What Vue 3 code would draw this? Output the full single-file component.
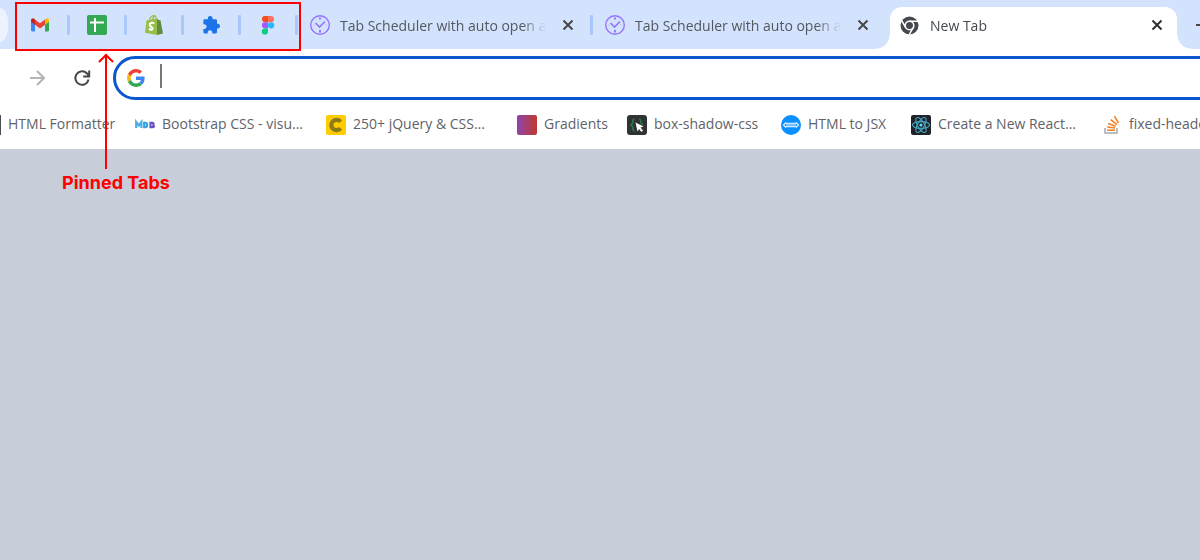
<script setup>
import { ref } from 'vue'

const pinned = ['Gmail', 'Sheets', 'Shopify', 'Extensions', 'Figma']
const tabs = ['Tab Scheduler with auto open and close', 'Tab Scheduler with auto open and close']
const bookmarks = [
  { icon: 'doc', label: 'HTML Formatter' },
  { icon: 'mdb', label: 'Bootstrap CSS - visu...' },
  { icon: 'jquery', label: '250+ jQuery & CSS...' },
  { icon: 'gradient', label: 'Gradients' },
  { icon: 'shadow', label: 'box-shadow-css' },
  { icon: 'jsx', label: 'HTML to JSX' },
  { icon: 'react', label: 'Create a New React...' },
  { icon: 'stack', label: 'fixed-header-table' },
]
const query = ref('')
</script>

<template>
  <div class="browser">
    <header class="strip">
      <div class="stub"></div>
      <button v-for="name in pinned" :key="name" class="pin" type="button" :aria-label="name">
        <svg v-if="name === 'Gmail'" width="20" height="20" viewBox="0 0 20 20">
          <path d="M1 6v9.300c0 .7.500 1.200 1.200 1.200H5V8.800z" fill="#4285f4" />
          <path d="M19 6v9.300c0 .7-.5 1.200-1.200 1.200H15V8.800z" fill="#34a853" />
          <path d="M15 4.500v5.300l4-3V5.300c0-2-2-2.500-3.300-1.500z" fill="#fbbc04" />
          <path d="M5 4.500v5.300l-4-3V5.300c0-2 2-2.500 3.300-1.500z" fill="#c5221f" />
          <path d="M5 4.500l5 3.800 5-3.800v5.300l-5 3.800-5-3.800z" fill="#ea4335" />
        </svg>
        <svg v-else-if="name === 'Sheets'" width="20" height="20" viewBox="0 0 20 20">
          <rect width="20" height="20" rx="2" fill="#34a853" />
          <path d="M3 7.500h14M8 3v14" stroke="#fff" stroke-width="2" />
        </svg>
        <svg v-else-if="name === 'Shopify'" width="20" height="20" viewBox="0 0 20 20">
          <path d="M2.500 5.500 13 3.500V20L1 17.700z" fill="#95bf47" />
          <path d="M13 3.500l1.500 1.500 2 .3L19 18.600 13 20z" fill="#5e8e3e" />
          <path d="M5.500 6C6 2.500 8.200.6 10 .6c1.700 0 2.300 2 2.300 4M8.500 5c.3-2 1.200-3.600 2.400-4" fill="none" stroke="#95bf47" stroke-width="1.200" />
          <path d="M10.300 8.300C8 7.200 5.600 8 5.700 9.900c.1 2 3 2 2.900 3.800-.1 1.500-2 1.500-3.800.2" fill="none" stroke="#fff" stroke-width="2" />
        </svg>
        <svg v-else-if="name === 'Extensions'" width="20" height="20" viewBox="0 0 20 20">
          <path d="M3.800 4.200H7C6.300 2.300 7.600 1 9.200 1s2.900 1.300 2.200 3.200h3.200c.8 0 1.400.6 1.400 1.400v3.200c1.800-.4 3 .8 3 2.300s-1.200 2.700-3 2.300v3.700c0 .8-.6 1.400-1.400 1.400h-3.300c.3-2-.8-3.200-2.300-3.200s-2.600 1.200-2.300 3.200H3.800c-.8 0-1.400-.6-1.400-1.400v-3.200c2 .3 3.200-.8 3.200-2.400S4.400 8.900 2.400 9.200V5.600c0-.8.6-1.400 1.400-1.400z" fill="#1a73e8" />
        </svg>
        <svg v-else width="20" height="20" viewBox="0 0 20 20">
          <path d="M10 1H7a3.100 3.100 0 0 0 0 6.200h3z" fill="#f24e1e" />
          <path d="M10 1h3a3.100 3.100 0 0 1 0 6.200h-3z" fill="#ff7262" />
          <path d="M10 7.200H7a3.100 3.100 0 0 0 0 6.200h3z" fill="#a259ff" />
          <circle cx="13.100" cy="10.300" r="3.100" fill="#1abcfe" />
          <path d="M10 13.400H7a3.100 3.100 0 1 0 3 3.100z" fill="#0acf83" />
        </svg>
      </button>
      <div v-for="(title, i) in tabs" :key="i" class="tab" :class="{ divided: i === 0 }">
        <svg width="20" height="20" viewBox="0 0 20 20" fill="none" stroke="#9775fa">
          <circle cx="10" cy="10" r="9.300" stroke-width="1.400" />
          <path d="M5.500 8l4 4L15 6.500" stroke-width="1.700" />
          <path d="M10 2.500v2M10 15v2.500" stroke-width="2" />
          <path d="M3.500 10h1M15.500 10h1" stroke-width="1" opacity=".5" />
        </svg>
        <span class="title">{{ title }}</span>
        <button class="close" type="button" aria-label="Close tab">
          <svg width="12" height="12" viewBox="0 0 12 12"><path d="M1.500 1.500l9 9m0-9l-9 9" stroke="#474747" stroke-width="2" /></svg>
        </button>
      </div>
      <div class="tab active">
        <svg width="20" height="20" viewBox="0 0 20 20">
          <circle cx="9.500" cy="9.500" r="9" fill="#45494d" />
          <circle cx="9.500" cy="9.500" r="4.300" fill="#45494d" stroke="#fff" stroke-width="1.600" />
          <path d="M9.500 5.200h8.500M5.800 11.700 1.600 4.500M13.200 11.700 9 19" stroke="#fff" stroke-width="1.500" />
        </svg>
        <span class="title">New Tab</span>
        <button class="close" type="button" aria-label="Close tab">
          <svg width="12" height="12" viewBox="0 0 12 12"><path d="M1.500 1.500l9 9m0-9l-9 9" stroke="#303030" stroke-width="2" /></svg>
        </button>
      </div>
      <button class="add" type="button" aria-label="New tab">
        <svg width="14" height="14" viewBox="0 0 14 14"><path d="M0 7h14M7 0v14" stroke="#474747" stroke-width="2" /></svg>
      </button>
    </header>

    <div class="toolbar">
      <button class="nav" type="button" aria-label="Back">
        <svg width="18" height="18" viewBox="0 0 18 18" fill="none" stroke="#b4b4b4" stroke-width="2"><path d="M17 9H2M9 2L2 9l7 7" /></svg>
      </button>
      <button class="nav" type="button" aria-label="Forward">
        <svg width="18" height="18" viewBox="0 0 18 18" fill="none" stroke="#b4b4b4" stroke-width="2"><path d="M2 9h14M9 2l7 7-7 7" /></svg>
      </button>
      <button class="nav" type="button" aria-label="Reload">
        <svg width="18" height="18" viewBox="0 0 18 18" fill="none" stroke="#474747" stroke-width="2"><path d="M15.600 10.500A6.700 6.700 0 1 1 14 4.500l2 2.500M16.200 1.500v6h-6" /></svg>
      </button>
      <label class="omnibox">
        <svg width="18" height="18" viewBox="0 0 48 48">
          <path fill="#ea4335" d="M24 9.500c3.540 0 6.710 1.220 9.210 3.600l6.850-6.850C35.900 2.380 30.470 0 24 0 14.620 0 6.510 5.380 2.560 13.220l7.980 6.190C12.430 13.720 17.740 9.500 24 9.500z" />
          <path fill="#4285f4" d="M46.980 24.550c0-1.570-.15-3.090-.38-4.550H24v9.020h12.940c-.58 2.960-2.260 5.480-4.780 7.180l7.730 6c4.510-4.180 7.090-10.360 7.090-17.650z" />
          <path fill="#fbbc05" d="M10.530 28.590c-.48-1.450-.76-2.990-.76-4.590s.27-3.140.76-4.590l-7.980-6.190C.92 16.460 0 20.120 0 24s.92 7.540 2.560 10.780z" />
          <path fill="#34a853" d="M24 48c6.480 0 11.930-2.130 15.890-5.810l-7.730-6c-2.150 1.450-4.920 2.300-8.160 2.300-6.260 0-11.570-4.220-13.470-9.910l-7.980 6.190C6.510 42.620 14.620 48 24 48z" />
        </svg>
        <span class="caret"></span>
        <input v-model="query" type="text" aria-label="Search Google or type a URL" />
      </label>
    </div>

    <nav class="bookmarks">
      <a v-for="b in bookmarks" :key="b.label" href="#">
        <svg v-if="b.icon === 'doc'" width="20" height="20" viewBox="0 0 20 20"><rect width="20" height="20" fill="#4b4f55" /></svg>
        <svg v-else-if="b.icon === 'mdb'" width="20" height="20" viewBox="0 0 20 20" fill="none" stroke-width="2.200">
          <path d="M1.200 13V7l2.600 3.500L6.400 7v6" stroke="#4aaeea" />
          <path d="M9.200 7.800h1c2.600 0 2.600 4.400 0 4.400h-1z" stroke="#3ba4dc" />
          <path d="M15.500 7.800h1.800c1.700 0 1.700 2.100 0 2.200 2.200 0 2.200 2.200 0 2.200h-1.800z" stroke="#6951c5" />
        </svg>
        <svg v-else-if="b.icon === 'jquery'" width="20" height="20" viewBox="0 0 20 20">
          <rect width="20" height="20" rx="2" fill="#fc0" /><path d="M14.600 6.800A5.200 5.200 0 1 0 14.600 13.200" fill="none" stroke="#8c7a14" stroke-width="4.200" />
        </svg>
        <span v-else-if="b.icon === 'gradient'" class="swatch"></span>
        <svg v-else-if="b.icon === 'shadow'" width="20" height="20" viewBox="0 0 20 20">
          <rect width="20" height="20" rx="3" fill="#303234" />
          <path d="M7.500 4C5 4 6 7 5.500 8.500L3.800 10l1.700 1.500C6 13 5 16 7.500 16M12 4c2.500 0 1.500 3 2 4.500L16 10" fill="none" stroke="#267c48" stroke-width="1.500" />
          <path d="M8.500 7.500l8 4-3 1 2.500 3-1.500 1.500-2.500-3-1.500 2.500z" fill="#fff" />
        </svg>
        <svg v-else-if="b.icon === 'jsx'" width="20" height="20" viewBox="0 0 20 20">
          <circle cx="10" cy="10" r="10" fill="#0b90ff" />
          <path d="M5 7.500 2.500 10 5 12.500M15 7.500l2.500 2.500-2.500 2.500" fill="none" stroke="#d7edff" stroke-width="1.300" />
          <path d="M4.500 8.300h11M4.500 11.700h11" stroke="#d7edff" stroke-width="1.300" /><path d="M5 10h10" stroke="#75c1ff" stroke-width="2.200" />
        </svg>
        <svg v-else-if="b.icon === 'react'" width="20" height="20" viewBox="0 0 20 20">
          <rect width="20" height="20" rx="2" fill="#20232a" />
          <g fill="none" stroke="#48a9c5" stroke-width="1.100">
            <ellipse cx="10" cy="10" rx="8.500" ry="3.400" /><ellipse cx="10" cy="10" rx="8.500" ry="3.400" transform="rotate(60 10 10)" /><ellipse cx="10" cy="10" rx="8.500" ry="3.400" transform="rotate(120 10 10)" />
          </g>
          <circle cx="10" cy="10" r="1.600" fill="#61dafb" />
        </svg>
        <svg v-else width="20" height="20" viewBox="0 0 20 20" fill="none">
          <path d="M3 13v5h12v-5" stroke="#a5abb0" stroke-width="1.500" />
          <path d="M5 15.300h8M5.200 12l8 1M6.200 8.500l7.500 2.700M8.700 4.700l6.300 5M12.400 1.200l4.100 6.800" stroke="#f48024" stroke-width="1.600" />
        </svg>
        <span class="label">{{ b.label }}</span>
      </a>
    </nav>

    <main class="page"></main>

    <div class="frame"></div>
    <svg class="arrow" width="18" height="117" viewBox="0 0 18 117" fill="none" stroke="#f00" stroke-width="2"><path d="M9 117V3M2 10l7-7 7 7" /></svg>
    <strong class="note">Pinned Tabs</strong>
  </div>
</template>

<style>
body { margin: 0; }
</style>

<style scoped>
.browser {
  position: relative;
  display: flex;
  flex-direction: column;
  min-height: 100vh;
  overflow: hidden;
  background: #fff;
  font-family: "Open Sans", "Noto Sans", sans-serif;
  font-size: 14px;
  line-height: 20px;
}
button {
  display: flex;
  align-items: center;
  justify-content: center;
  padding: 0;
  border: 0;
  background: none;
}
svg { display: block; flex: none; }
.strip {
  display: flex;
  height: 49px;
  background: #d3e2fd;
}
.stub {
  flex: none;
  width: 8px;
  height: 34px;
  margin: 8px 5px 0 0;
  border-radius: 0 8px 8px 0 / 0 14px 14px 0;
  background: #edf3fe;
}
.pin {
  position: relative;
  flex: none;
  width: 57px;
  padding-right: 3px;
}
.pin::after, .divided::after {
  content: "";
  position: absolute;
  top: 15px;
  right: 0;
  width: 3px;
  height: 20px;
  border-radius: 1px;
  background: #a8c7fa;
}
.tab {
  position: relative;
  display: flex;
  flex: none;
  align-items: center;
  box-sizing: border-box;
  width: 295px;
  padding: 2px 18px 0 12px;
  color: #53585f;
}
.tab > svg { margin: 0 10px 2px 0; }
.title {
  flex: 1;
  overflow: hidden;
  white-space: nowrap;
  mask-image: linear-gradient(90deg, #000 88%, transparent);
}
.close {
  width: 14px;
  height: 20px;
  margin: 0 0 2px 15px;
}
.active {
  flex: 1;
  min-width: 0;
  margin: 7px 0 0 2px;
  padding: 0 13px 4px 10px;
  border-radius: 12px 12px 0 0;
  background: #fff;
  color: #45494d;
}
.active > svg { margin-bottom: 0; }
.active .close { margin-bottom: 2px; }
.active::before, .active::after {
  content: "";
  position: absolute;
  bottom: 0;
  width: 14px;
  height: 14px;
}
.active::before {
  right: 100%;
  background: radial-gradient(circle at 0 0, transparent 13px, #fff 14px);
}
.active::after {
  left: 100%;
  background: radial-gradient(circle at 100% 0, transparent 13px, #fff 14px);
}
.add {
  flex: none;
  width: 4px;
  margin-left: 19px;
  justify-content: flex-start;
}
.toolbar {
  display: flex;
  align-items: center;
  height: 44px;
  padding: 7px 0 0;
}
.nav {
  flex: none;
  width: 45px;
  height: 44px;
}
.nav:first-child { margin-left: -31px; }
.omnibox {
  display: flex;
  flex: 1;
  align-items: center;
  box-sizing: border-box;
  height: 44px;
  margin: 0 -24px 0 9px;
  padding-left: 11px;
  border: 3px solid #0b57d0;
  border-radius: 22px;
}
.caret {
  width: 2px;
  height: 24px;
  margin: 0 4px 4px 15px;
  background: #777;
}
.omnibox input {
  flex: 1;
  border: 0;
  outline: 0;
  background: none;
  font: inherit;
}
.bookmarks {
  display: grid;
  grid-template-columns: 154px 191px 191px 110px 154px 130px 191px 200px;
  height: 49px;
  margin-left: -19px;
  align-items: center;
}
.bookmarks a {
  display: flex;
  align-items: center;
  gap: 7px;
  color: #5f6368;
  text-decoration: none;
  white-space: nowrap;
}
.label { padding-bottom: 2px; }
.swatch {
  width: 20px;
  height: 20px;
  border-radius: 2px;
  background: linear-gradient(90deg, #8e44ad, #c0392b);
}
.page {
  flex: 1;
  background: #c7cdd9;
}
.frame {
  position: absolute;
  top: 2px;
  left: 15px;
  box-sizing: border-box;
  width: 286px;
  height: 49px;
  border: 2px solid #f00;
}
.arrow {
  position: absolute;
  top: 52px;
  left: 97px;
}
.note {
  position: absolute;
  top: 172px;
  left: 62px;
  color: #f00;
  font: 700 18px/22px Inter, sans-serif;
}
</style>
